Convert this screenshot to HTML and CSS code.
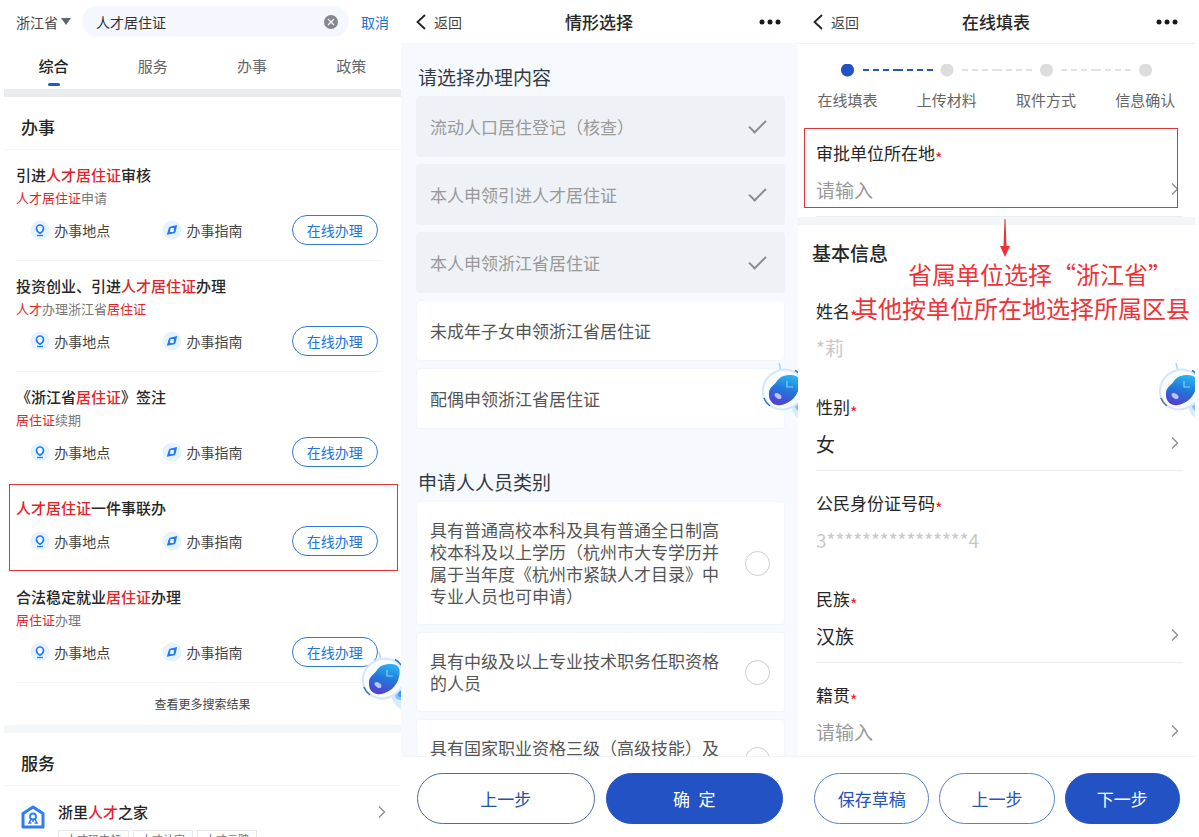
FILE: index.html
```html
<!DOCTYPE html>
<html lang="zh-CN">

<head>
    <meta charset="UTF-8">
    <meta name="viewport" content="width=device-width, initial-scale=1.0">
    <title>人才居住证</title>
    <link rel="stylesheet" href="styles.css">
</head>

<body>
    <svg class="defs" aria-hidden="true">
        <symbol id="i-place" viewBox="0 0 20 20">
            <circle cx="10" cy="10" r="9.5" fill="#e6f2ff" />
            <path d="M10 13.2C7.600 11.800 6.500 10.300 6.500 8.500a3.500 3.500 0 0 1 7 0c0 1.800-1.100 3.300-3.500 4.700z" fill="#f4faff" stroke="#1f7cf2" stroke-width="1.700" stroke-linejoin="round" />
            <path d="M7 15.500h6" stroke="#1f7cf2" stroke-width="1.300" />
        </symbol>
        <symbol id="i-guide" viewBox="0 0 20 20">
            <circle cx="10" cy="10" r="9.500" fill="#e6f2ff" />
            <path d="M15.200 5L13.500 12 12.500 13.300 4.800 14.800 6.800 8 7.800 6.700z" fill="#1f7cf2" />
            <path d="M8.600 8.100h3.400l-.500 3.800H8z" fill="#f4faff" />
        </symbol>
        <symbol id="i-back" viewBox="0 0 10 16">
            <path d="M9 1L1.500 8 9 15" fill="none" stroke="#222" stroke-width="1.800" />
        </symbol>
        <symbol id="i-more" viewBox="0 0 22 6">
            <circle cx="3" cy="3" r="2.500" fill="#1a1a1a" />
            <circle cx="11" cy="3" r="2.500" fill="#1a1a1a" />
            <circle cx="19" cy="3" r="2.500" fill="#1a1a1a" />
        </symbol>
        <symbol id="i-right" viewBox="0 0 8 14">
            <path d="M1 1.500L6.500 7 1 12.500" fill="none" stroke="#8a8a8a" stroke-width="1.300" />
        </symbol>
        <symbol id="i-robot" viewBox="0 0 52 60">
            <path d="M17 1l2 8" stroke="#a9d8f5" stroke-width="1.500" />
            <path d="M28 38l10-4 10 2v22h-9c-6-3-10-9-11-20z" fill="#d9ecfe" />
            <circle cx="38" cy="44" r="5" fill="#7fc3f8" />
            <circle cx="39" cy="43" r="3" fill="#3f9bee" />
            <ellipse cx="21.500" cy="27.500" rx="21" ry="19.500" transform="rotate(-30 21.500 27.500)" fill="#f8fcff" stroke="#d3e6fb" stroke-width="2" />
            <path d="M1.800 36c1.500 3.500 3.500 6 6.200 8" fill="none" stroke="#3a74bd" stroke-width="1.500" />
            <path d="M33 8.500c2.500 1.300 4.500 3 6 5.500" fill="none" stroke="#3a74bd" stroke-width="1.500" />
            <path d="M15 19C18 14.500 23 13 29 13 36 13 38.500 17 37.500 23.500 36.500 31 32 37.500 26 40.500 22 42.800 17 44 13 42.500 8 40.500 6.500 35.500 7 30.500 7.500 25 12.500 23 15 19z" fill="url(#face)" />
            <ellipse cx="16" cy="34" rx="3.800" ry="2.300" transform="rotate(35 16 34)" fill="#b9c4f3" />
            <path d="M25 19v6h6" fill="none" stroke="#7fd3f7" stroke-width="1.200" />
        </symbol>
        <linearGradient id="face" x1="0.700" y1="0" x2="0.400" y2="1">
            <stop offset="0" stop-color="#2bb4ee" />
            <stop offset="0.500" stop-color="#2277da" />
            <stop offset="1" stop-color="#5340cf" />
        </linearGradient>
    </svg>

    <!-- 搜索结果 -->
    <section class="phone">
        <header class="search">
            <button class="area" type="button">浙江省<i></i></button>
            <div class="search-box">
                <input type="text" aria-label="搜索" value="人才居住证">
                <button class="clear" type="button" aria-label="清空">
                    <svg viewBox="0 0 14 14">
                        <circle cx="7" cy="7" r="7" fill="#84878f" />
                        <path d="M4 4l6 6M10 4l-6 6" stroke="#fff" stroke-width="1.200" />
                    </svg>
                </button>
            </div>
            <button class="cancel" type="button">取消</button>
        </header>
        <nav class="tabs">
            <a class="on" href="#">综合</a>
            <a href="#">服务</a>
            <a href="#">办事</a>
            <a href="#">政策</a>
        </nav>
        <main class="results">
            <h2>办事</h2>
            <article class="item">
                <h3>引进<em>人才居住证</em>审核</h3>
                <p><em>人才居住证</em>申请</p>
                <div class="links">
                    <a href="#"><svg><use href="#i-place" /></svg>办事地点</a>
                    <a href="#"><svg><use href="#i-guide" /></svg>办事指南</a>
                    <button type="button">在线办理</button>
                </div>
            </article>
            <article class="item">
                <h3>投资创业、引进<em>人才居住证</em>办理</h3>
                <p><em>人才</em>办理浙江省<em>居住证</em></p>
                <div class="links">
                    <a href="#"><svg><use href="#i-place" /></svg>办事地点</a>
                    <a href="#"><svg><use href="#i-guide" /></svg>办事指南</a>
                    <button type="button">在线办理</button>
                </div>
            </article>
            <article class="item">
                <h3>《浙江省<em>居住证</em>》签注</h3>
                <p><em>居住证</em>续期</p>
                <div class="links">
                    <a href="#"><svg><use href="#i-place" /></svg>办事地点</a>
                    <a href="#"><svg><use href="#i-guide" /></svg>办事指南</a>
                    <button type="button">在线办理</button>
                </div>
            </article>
            <article class="item marked">
                <h3><em>人才居住证</em>一件事联办</h3>
                <div class="links">
                    <a href="#"><svg><use href="#i-place" /></svg>办事地点</a>
                    <a href="#"><svg><use href="#i-guide" /></svg>办事指南</a>
                    <button type="button">在线办理</button>
                </div>
            </article>
            <article class="item">
                <h3>合法稳定就业<em>居住证</em>办理</h3>
                <p><em>居住证</em>办理</p>
                <div class="links">
                    <a href="#"><svg><use href="#i-place" /></svg>办事地点</a>
                    <a href="#"><svg><use href="#i-guide" /></svg>办事指南</a>
                    <button type="button">在线办理</button>
                </div>
            </article>
            <a class="all" href="#">查看更多搜索结果</a>
            <h2 class="second">服务</h2>
            <article class="service">
                <svg class="house" viewBox="0 0 24 24">
                    <path d="M2 8.500L12 2l10 6.500V22H2z" fill="#fff" stroke="#2f7df0" stroke-width="3" stroke-linejoin="round" />
                    <circle cx="12" cy="11.500" r="3" fill="none" stroke="#2f7df0" stroke-width="1.800" />
                    <path d="M10.200 13.800L8 18h2.500M13.800 13.800L16 18h-2.500M12 15v2" fill="none" stroke="#2f7df0" stroke-width="1.500" />
                </svg>
                <div class="service-text">
                    <h3>浙里<em>人才</em>之家</h3>
                    <ul>
                        <li>人才码申领</li>
                        <li>人才认定</li>
                        <li>人才云聘</li>
                    </ul>
                </div>
                <svg class="right"><use href="#i-right" /></svg>
            </article>
        </main>
        <svg class="robot low"><use href="#i-robot" /></svg>
    </section>

    <!-- 情形选择 -->
    <section class="phone blue">
        <header class="bar">
            <a class="back" href="#"><svg><use href="#i-back" /></svg>返回</a>
            <h1>情形选择</h1>
            <button class="more" type="button" aria-label="更多"><svg><use href="#i-more" /></svg></button>
        </header>
        <main class="choose">
            <h2>请选择办理内容</h2>
            <div class="cards">
                <label class="card off"><span>流动人口居住登记（核查）</span><input type="checkbox" checked disabled></label>
                <label class="card off"><span>本人申领引进人才居住证</span><input type="checkbox" checked disabled></label>
                <label class="card off"><span>本人申领浙江省居住证</span><input type="checkbox" checked disabled></label>
                <label class="card"><span>未成年子女申领浙江省居住证</span><input type="checkbox"></label>
                <label class="card"><span>配偶申领浙江省居住证</span><input type="checkbox"></label>
            </div>
            <h2>申请人人员类别</h2>
            <div class="cards">
                <label class="card"><span>具有普通高校本科及具有普通全日制高校本科及以上学历（杭州市大专学历并属于当年度《杭州市紧缺人才目录》中专业人员也可申请）</span><input type="radio" name="kind"></label>
                <label class="card"><span>具有中级及以上专业技术职务任职资格的人员</span><input type="radio" name="kind"></label>
                <label class="card"><span>具有国家职业资格三级（高级技能）及以上的人员</span><input type="radio" name="kind"></label>
            </div>
        </main>
        <footer class="buttons">
            <button type="button">上一步</button>
            <button class="primary" type="button">确&ensp;定</button>
        </footer>
        <svg class="robot"><use href="#i-robot" /></svg>
    </section>

    <!-- 在线填表 -->
    <section class="phone">
        <header class="bar line">
            <a class="back" href="#"><svg><use href="#i-back" /></svg>返回</a>
            <h1>在线填表</h1>
            <button class="more" type="button" aria-label="更多"><svg><use href="#i-more" /></svg></button>
        </header>
        <main class="form">
            <ol class="steps">
                <li class="now">在线填表</li>
                <li>上传材料</li>
                <li>取件方式</li>
                <li>信息确认</li>
            </ol>
            <div class="field marked">
                <label for="place">审批单位所在地<b>*</b></label>
                <div class="value">
                    <select id="place" class="empty"><option>请输入</option></select>
                    <svg class="right"><use href="#i-right" /></svg>
                </div>
            </div>
            <h2>基本信息</h2>
            <div class="field plain">
                <label for="name">姓名<b>*</b></label>
                <div class="value"><input id="name" type="text" value="*莉" disabled></div>
            </div>
            <div class="field">
                <label for="sex">性别<b>*</b></label>
                <div class="value">
                    <select id="sex"><option>女</option></select>
                    <svg class="right"><use href="#i-right" /></svg>
                </div>
            </div>
            <div class="field plain">
                <label for="idno">公民身份证号码<b>*</b></label>
                <div class="value"><input id="idno" type="text" value="3****************4" disabled></div>
            </div>
            <div class="field">
                <label for="nation">民族<b>*</b></label>
                <div class="value">
                    <select id="nation"><option>汉族</option></select>
                    <svg class="right"><use href="#i-right" /></svg>
                </div>
            </div>
            <div class="field">
                <label for="origin">籍贯<b>*</b></label>
                <div class="value">
                    <select id="origin" class="empty"><option>请输入</option></select>
                    <svg class="right"><use href="#i-right" /></svg>
                </div>
            </div>
        </main>
        <footer class="buttons three">
            <button type="button">保存草稿</button>
            <button type="button">上一步</button>
            <button class="primary" type="button">下一步</button>
        </footer>
        <div class="note">
            <svg viewBox="0 0 10 38">
                <path d="M4.500 0h1L6.500 27H10L5 38 0 27h3.500z" fill="#ee3338" />
            </svg>
            <p class="first">省属单位选择“浙江省”</p>
            <p>其他按单位所在地选择所属区县</p>
        </div>
        <svg class="robot"><use href="#i-robot" /></svg>
    </section>
</body>

</html>
```
FILE: styles.css
```css
* {
    margin: 0;
    padding: 0;
    box-sizing: border-box;
}

body {
    display: grid;
    grid-template-columns: repeat(3, 1fr);
    height: 100vh;
    padding: 0 4px;
    overflow: hidden;
    background: #fff;
    color: #262626;
    font-family: "Noto Sans CJK SC", "Noto Sans", sans-serif;
    font-size: 14px;
}

a {
    color: inherit;
    text-decoration: none;
}

em {
    font-style: normal;
    color: #e0252b;
}

ul,
ol {
    list-style: none;
}

button,
input,
select {
    border: 0;
    background: none;
    color: inherit;
    font: inherit;
    outline: none;
}

.defs {
    position: absolute;
    width: 0;
    height: 0;
}

.phone {
    position: relative;
    display: flex;
    flex-direction: column;
    min-width: 0;
    height: 100vh;
    overflow: hidden;
}

.phone main {
    flex: 1;
    min-height: 0;
    overflow: hidden;
}

.blue {
    background: #f6faff;
}

.right {
    flex: none;
    width: 8px;
    height: 14px;
}

/* 搜索 */
.search {
    display: flex;
    align-items: center;
    height: 43px;
    padding: 0 12px;
}

.area {
    display: flex;
    align-items: center;
    gap: 3px;
    color: #444;
}

.area i {
    border: 5px solid transparent;
    border-top: 7px solid #5d6675;
    border-bottom: 0;
}

.search-box {
    display: flex;
    flex: 1;
    align-items: center;
    min-width: 0;
    height: 31px;
    margin: 0 12px 0 11px;
    padding: 0 11px 0 14px;
    border-radius: 16px;
    background: #f4f7fe;
}

.search-box input {
    flex: 1;
    min-width: 0;
    color: #333;
}

.clear,
.clear svg {
    display: block;
    width: 14px;
    height: 14px;
}

.cancel {
    color: #1c70d8;
}

.tabs {
    display: grid;
    grid-template-columns: repeat(4, 1fr);
    height: 46px;
    color: #666;
    font-size: 15px;
    line-height: 24px;
    text-align: center;
}

.tabs a {
    padding-top: 11px;
}

.tabs .on {
    color: #222;
    font-weight: 500;
}

.tabs .on::after {
    content: "";
    display: block;
    width: 12px;
    height: 3px;
    margin: 5px auto 0;
    border-radius: 2px;
    background: #2456c8;
}

.results {
    border-top: 8px solid #e9edef;
}

.results h2 {
    padding: 18px 17px 10px;
    border-bottom: 1px solid #f5f5f5;
    font-size: 17px;
    font-weight: 500;
    line-height: 24px;
}

.results .second {
    border-top: 8px solid #f4f7fa;
}

.item {
    position: relative;
    margin: 0 18px 0 12px;
    padding: 13px 0 15px;
    border-bottom: 1px solid #f4f4f4;
}

.results h3 {
    font-size: 15px;
    font-weight: 500;
    line-height: 24px;
}

.item p {
    color: #777;
    font-size: 13px;
    line-height: 22px;
}

.links {
    display: grid;
    grid-template-columns: repeat(3, 1fr);
    margin: 6px -18px 0 -12px;
}

.links a {
    display: flex;
    align-items: center;
    justify-content: center;
    gap: 4px;
    color: #444;
}

.links svg {
    width: 20px;
    height: 20px;
}

.links button {
    justify-self: center;
    width: 86px;
    height: 30px;
    border: 1px solid #3079dc;
    border-radius: 15px;
    color: #2074dc;
}

.item.marked::after {
    content: "";
    position: absolute;
    top: 1px;
    right: -15px;
    bottom: 0;
    left: -7px;
    border: 1px solid #e4343a;
    pointer-events: none;
}

.all {
    display: block;
    color: #444;
    font-size: 12px;
    line-height: 42px;
    text-align: center;
}

.service {
    display: flex;
    align-items: flex-start;
    padding: 14px 15px 14px 17px;
}

.house {
    flex: none;
    width: 24px;
    height: 24px;
    margin-top: 5px;
}

.service-text {
    flex: 1;
    padding-left: 13px;
}

.service ul {
    display: flex;
    gap: 4px;
    margin-top: 6px;
}

.service li {
    padding: 0 7px;
    border: 1px solid #e6e6e6;
    color: #777;
    font-size: 11px;
    line-height: 16px;
}

.service .right {
    margin-top: 5px;
}

/* 标题栏 */
.bar {
    display: grid;
    grid-template-columns: 1fr auto 1fr;
    align-items: center;
    height: 43px;
    padding: 0 16px 0 15px;
    background: #fff;
}

.bar.line {
    height: 44px;
    border-bottom: 1px solid #f0f0f0;
}

.bar h1 {
    font-size: 17px;
    font-weight: 500;
}

.back {
    display: flex;
    align-items: center;
    gap: 8px;
    color: #444;
}

.back svg {
    width: 10px;
    height: 16px;
}

.more {
    justify-self: end;
}

.more svg {
    display: block;
    width: 24px;
    height: 6px;
}

/* 情形选择 */
.choose {
    padding: 0 14px 0 16px;
}

.choose h2 {
    padding: 20px 0 6px 1px;
    color: #333a45;
    font-size: 19px;
    font-weight: 400;
    line-height: 28px;
}

.cards + h2 {
    padding-top: 40px;
}

.cards {
    display: flex;
    flex-direction: column;
    gap: 9px;
}

.card {
    display: flex;
    align-items: center;
    justify-content: space-between;
    gap: 16px;
    min-height: 59px;
    padding: 17px 14px 17px 13px;
    border-radius: 3px;
    background: #fff;
    box-shadow: 0 0 2px #e4eaf2;
    color: #555;
    font-size: 17px;
    line-height: 22px;
}

.card.off {
    background: #eef1f5;
    box-shadow: 0 0 0 1px #eef1f5;
    color: #999;
}

.card input {
    appearance: none;
    flex: none;
    width: 25px;
    height: 25px;
}

.card input[type="radio"] {
    border: 1px solid #ccc;
    border-radius: 50%;
}

.card input[type="checkbox"]:checked::after {
    content: "";
    display: block;
    width: 15px;
    height: 7px;
    margin: 6px auto 0;
    border: solid #8c8c8c;
    border-width: 0 0 2px 2px;
    transform: rotate(-45deg);
}

/* 底部按钮 */
.buttons {
    display: grid;
    grid-template-columns: 1fr 1fr;
    gap: 11px;
    padding: 16px 15px 13px 16px;
    border-top: 1px solid #f0f3f7;
    background: #fff;
    font-size: 17px;
}

.buttons.three {
    grid-template-columns: 1fr 1fr 1fr;
    gap: 10px;
}

.buttons button {
    height: 51px;
    border: 1px solid #4a6aa8;
    border-radius: 26px;
    color: #2450a8;
}

.three button {
    border-color: #5a80cc;
    color: #2454c0;
}

.buttons .primary {
    border-color: #2252c4;
    background: #2252c4;
    color: #fff;
}

/* 在线填表 */
.steps {
    display: grid;
    grid-template-columns: repeat(4, 1fr);
    height: 77px;
    padding-top: 20px;
    color: #666;
    font-size: 15px;
    line-height: 24px;
    text-align: center;
}

.steps li {
    position: relative;
    background: radial-gradient(circle at 50% 6px, #ddd 6px, transparent 7px);
    padding-top: 24px;
}

.steps .now {
    background: radial-gradient(circle at 50% 6px, #2252c4 6px, transparent 7px);
}

/* 圆点之间的虚线 */
.steps li:not(:last-child)::before,
.steps li:not(:last-child)::after {
    content: "";
    position: absolute;
    top: 5px;
    left: calc(50% + 15px);
    width: 35px;
    height: 2px;
    background: repeating-linear-gradient(to right, #e2e2e2 0 6px, transparent 6px 10px);
}

.steps li:not(:last-child)::after {
    left: calc(50% + 50px);
    background: repeating-linear-gradient(to left, #e2e2e2 0 6px, transparent 6px 10px);
}

.steps li.now::before {
    background: repeating-linear-gradient(to right, #2a55b8 0 6px, transparent 6px 10px);
}

.steps li.now::after {
    background: repeating-linear-gradient(to left, #2a55b8 0 6px, transparent 6px 10px);
}

.form h2 {
    padding: 14px 14px 12px;
    border-top: 8px solid #f1f6fa;
    font-size: 19px;
    font-weight: 500;
    line-height: 28px;
}

.field {
    position: relative;
    margin: 0 12px 0 18px;
    padding: 20px 0 12px;
    border-bottom: 1px solid #ededef;
}

.field.plain {
    border-color: transparent;
}

.field label {
    display: block;
    height: 24px;
    font-size: 17px;
    line-height: 24px;
}

.field b {
    color: #e0252b;
    font-size: 16px;
    font-weight: 400;
    vertical-align: -5px;
    line-height: 1;
}

.value {
    display: flex;
    align-items: center;
    height: 30px;
    margin-top: 9px;
    padding-right: 4px;
    font-size: 19px;
}

.value input,
.value select {
    appearance: none;
    flex: 1;
    min-width: 0;
    opacity: 1;
}

.value input:disabled {
    color: #c8c8c8;
}

.value .empty {
    color: #999;
}

.field.marked::after {
    content: "";
    position: absolute;
    top: 7px;
    right: 5px;
    bottom: 8px;
    left: -12px;
    border: 1px solid #e4343a;
    pointer-events: none;
}

.note {
    position: absolute;
    top: 219px;
    right: 5px;
    color: #ee3338;
    font-size: 24px;
    line-height: 34px;
    white-space: nowrap;
    pointer-events: none;
}

.note svg {
    display: block;
    width: 10px;
    height: 38px;
    margin-left: 146px;
}

.note .first {
    padding-left: 54px;
}

.robot {
    position: absolute;
    top: 362px;
    right: -16px;
    width: 52px;
    height: 60px;
}

.robot.low {
    top: 651px;
    right: -13px;
}
```
